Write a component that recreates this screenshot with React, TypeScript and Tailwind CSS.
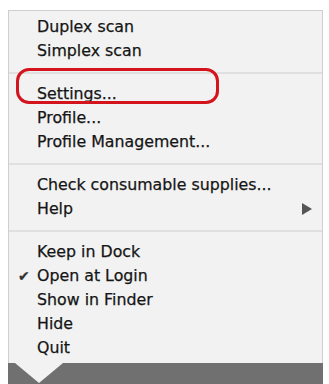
import React from "react";

type Item = { label: string; check?: boolean; sub?: boolean } | "sep";

const items: Item[] = [
  { label: "Duplex scan" },
  { label: "Simplex scan" },
  "sep",
  { label: "Settings..." },
  { label: "Profile..." },
  { label: "Profile Management..." },
  "sep",
  { label: "Check consumable supplies..." },
  { label: "Help", sub: true },
  "sep",
  { label: "Keep in Dock" },
  { label: "Open at Login", check: true },
  { label: "Show in Finder" },
  { label: "Hide" },
  { label: "Quit" },
];

export default function App() {
  return (
    <div className="relative w-[329px] h-[384px] bg-white overflow-hidden font-['DejaVu_Sans',sans-serif] text-[#151515]">
      <div className="ml-[8px] mt-[10px] w-[315px] h-[353px] bg-[#f2f2f2] border border-[#cfcfcf] border-b-0 pt-[4px] flex flex-col">
        {items.map((it, i) =>
          it === "sep" ? (
            <div key={i} className="h-[19px] flex items-center">
              <div className="h-[2px] w-full bg-[#e0e0e0]" />
            </div>
          ) : (
            <div key={i} className="relative h-[24px] flex items-center pl-[28px] text-[15.8px] leading-none [-webkit-text-stroke:0.25px_#151515]">
              {it.check && (
                <span className="absolute left-[9px] top-[5px] text-[14px] text-[#333]">✔</span>
              )}
              <span>{it.label}</span>
              {it.sub && (
                <svg className="absolute left-[293px] top-[6px]" width="10" height="12" viewBox="0 0 10 12">
                  <polygon points="0,0 10,6 0,12" fill="#555" />
                </svg>
              )}
            </div>
          )
        )}
      </div>
      <div className="relative ml-[8px] w-[315px] h-[21px] bg-[#707070]">
        <svg className="absolute left-[7px] top-0" width="48" height="21" viewBox="0 0 48 21">
          <polygon points="0,0 48,0 24,20" fill="#f2f2f2" />
        </svg>
      </div>
      <div className="absolute left-[16px] top-[68px] w-[203px] h-[36px] border-[3px] border-[#d3141c] rounded-[13px]" />
    </div>
  );
}
